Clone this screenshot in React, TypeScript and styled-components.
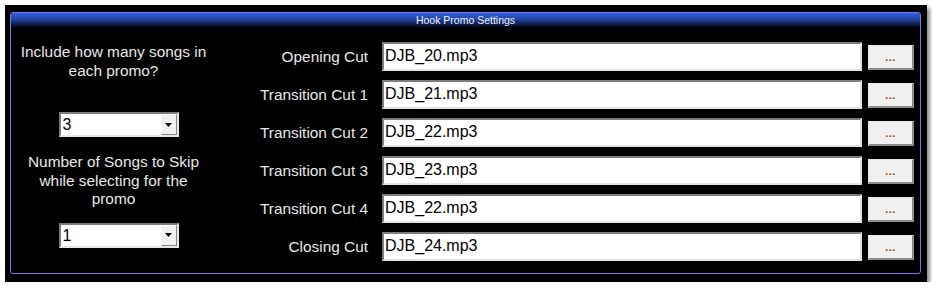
import styled, { createGlobalStyle } from 'styled-components';

const GlobalStyle = createGlobalStyle`
    body {
        margin: 5px;
        background: #ffffff;
        font-family: 'Liberation Sans', Arial, sans-serif;
    }
`;

const cuts = [
    { label: 'Opening Cut', file: 'DJB_20.mp3' },
    { label: 'Transition Cut 1', file: 'DJB_21.mp3' },
    { label: 'Transition Cut 2', file: 'DJB_22.mp3' },
    { label: 'Transition Cut 3', file: 'DJB_23.mp3' },
    { label: 'Transition Cut 4', file: 'DJB_22.mp3' },
    { label: 'Closing Cut', file: 'DJB_24.mp3' },
];

const DropDown: React.FC<{ value: string }> = ({ value }) => (
    <Select>
        <SelectValue>{value}</SelectValue>
        <ArrowBox>
            <svg width="7" height="4" viewBox="0 0 7 4">
                <path d="M0 0h7L3.5 4z" fill="#000" />
            </svg>
        </ArrowBox>
    </Select>
);

const App = () => {
    return (
        <>
            <GlobalStyle />
            <Frame>
                <Panel>
                    <Header>Hook Promo Settings</Header>
                    <Body>
                        <LeftColumn>
                            <Prompt>Include how many songs in each promo?</Prompt>
                            <DropDown value="3" />
                            <Prompt $gap={16}>Number of Songs to Skip while selecting for the promo</Prompt>
                            <DropDown value="1" />
                        </LeftColumn>
                        <Rows>
                            {cuts.map((cut) => (
                                <Row key={cut.label}>
                                    <Label>{cut.label}</Label>
                                    <FileField>{cut.file}</FileField>
                                    <BrowseButton>...</BrowseButton>
                                </Row>
                            ))}
                        </Rows>
                    </Body>
                </Panel>
            </Frame>
        </>
    );
};

export default App;

const Frame = styled.div`
    width: fit-content;
    background: #000;
    padding: 7px 6px 8px 5px;
    box-shadow: 3px 3px 4px rgba(0, 0, 0, 0.45);
`;

const Panel = styled.div`
    width: 909px;
    border: 1px solid #7474f4;
    border-radius: 3px;
    overflow: hidden;
`;

const Header = styled.div`
    height: 15px;
    background: linear-gradient(to bottom, #3360dc 0%, #2146aa 40%, #000 100%);
    color: #eef2ff;
    font-size: 10.5px;
    line-height: 15px;
    text-align: center;
`;

const Body = styled.div`
    display: grid;
    grid-template-columns: 215px 1fr;
    padding: 14px 0 12px 0;
`;

const LeftColumn = styled.div`
    display: flex;
    flex-direction: column;
    align-items: center;
`;

const Prompt = styled.div<{ $gap?: number }>`
    width: 186px;
    margin-right: 10px;
    margin-top: ${(p) => p.$gap ?? 1}px;
    color: #e8e8e8;
    font-size: 15.4px;
    line-height: 18.5px;
    text-align: center;
`;

const Select = styled.div`
    box-sizing: border-box;
    width: 120px;
    height: 25px;
    margin-top: 32px;
    display: flex;
    align-items: stretch;
    background: #fff;
    border: 2px solid;
    border-color: #7c7c7c #e6e6e6 #e6e6e6 #7c7c7c;

    &:last-child {
        margin-top: 14px;
    }
`;

const SelectValue = styled.div`
    flex: 1;
    padding-left: 2px;
    color: #000;
    font-size: 16px;
    line-height: 21px;
`;

const ArrowBox = styled.div`
    box-sizing: border-box;
    width: 16px;
    display: flex;
    align-items: center;
    justify-content: center;
    background: #f0f0f0;
    border: 1px solid;
    border-color: #fafafa #8a8a8a #8a8a8a #fafafa;
`;

const Rows = styled.div`
    display: flex;
    flex-direction: column;
    gap: 9px;
`;

const Row = styled.div`
    display: flex;
    align-items: flex-start;
    height: 29px;
`;

const Label = styled.div`
    width: 142px;
    margin-right: 14px;
    align-self: center;
    color: #e8e8e8;
    font-size: 15.4px;
    text-align: right;
    white-space: nowrap;
`;

const FileField = styled.div`
    box-sizing: border-box;
    width: 480px;
    height: 29px;
    padding: 3px 1px 0;
    background: #fff;
    border: 2px solid;
    border-color: #7c7c7c #e2e2e2 #e2e2e2 #7c7c7c;
    color: #000;
    font-size: 16px;
    line-height: 18px;
`;

const BrowseButton = styled.div`
    box-sizing: border-box;
    width: 46px;
    height: 25px;
    margin: 3px 0 0 6px;
    padding-top: 1px;
    background: #f0f0f0;
    border: 1px solid;
    border-color: #e4e4e4 #8a8a8a #8a8a8a #e4e4e4;
    border-width: 1px 2px 2px 1px;
    color: #9a4200;
    font-size: 11px;
    font-weight: bold;
    line-height: 20px;
    text-align: center;
    letter-spacing: 0.5px;
`;
